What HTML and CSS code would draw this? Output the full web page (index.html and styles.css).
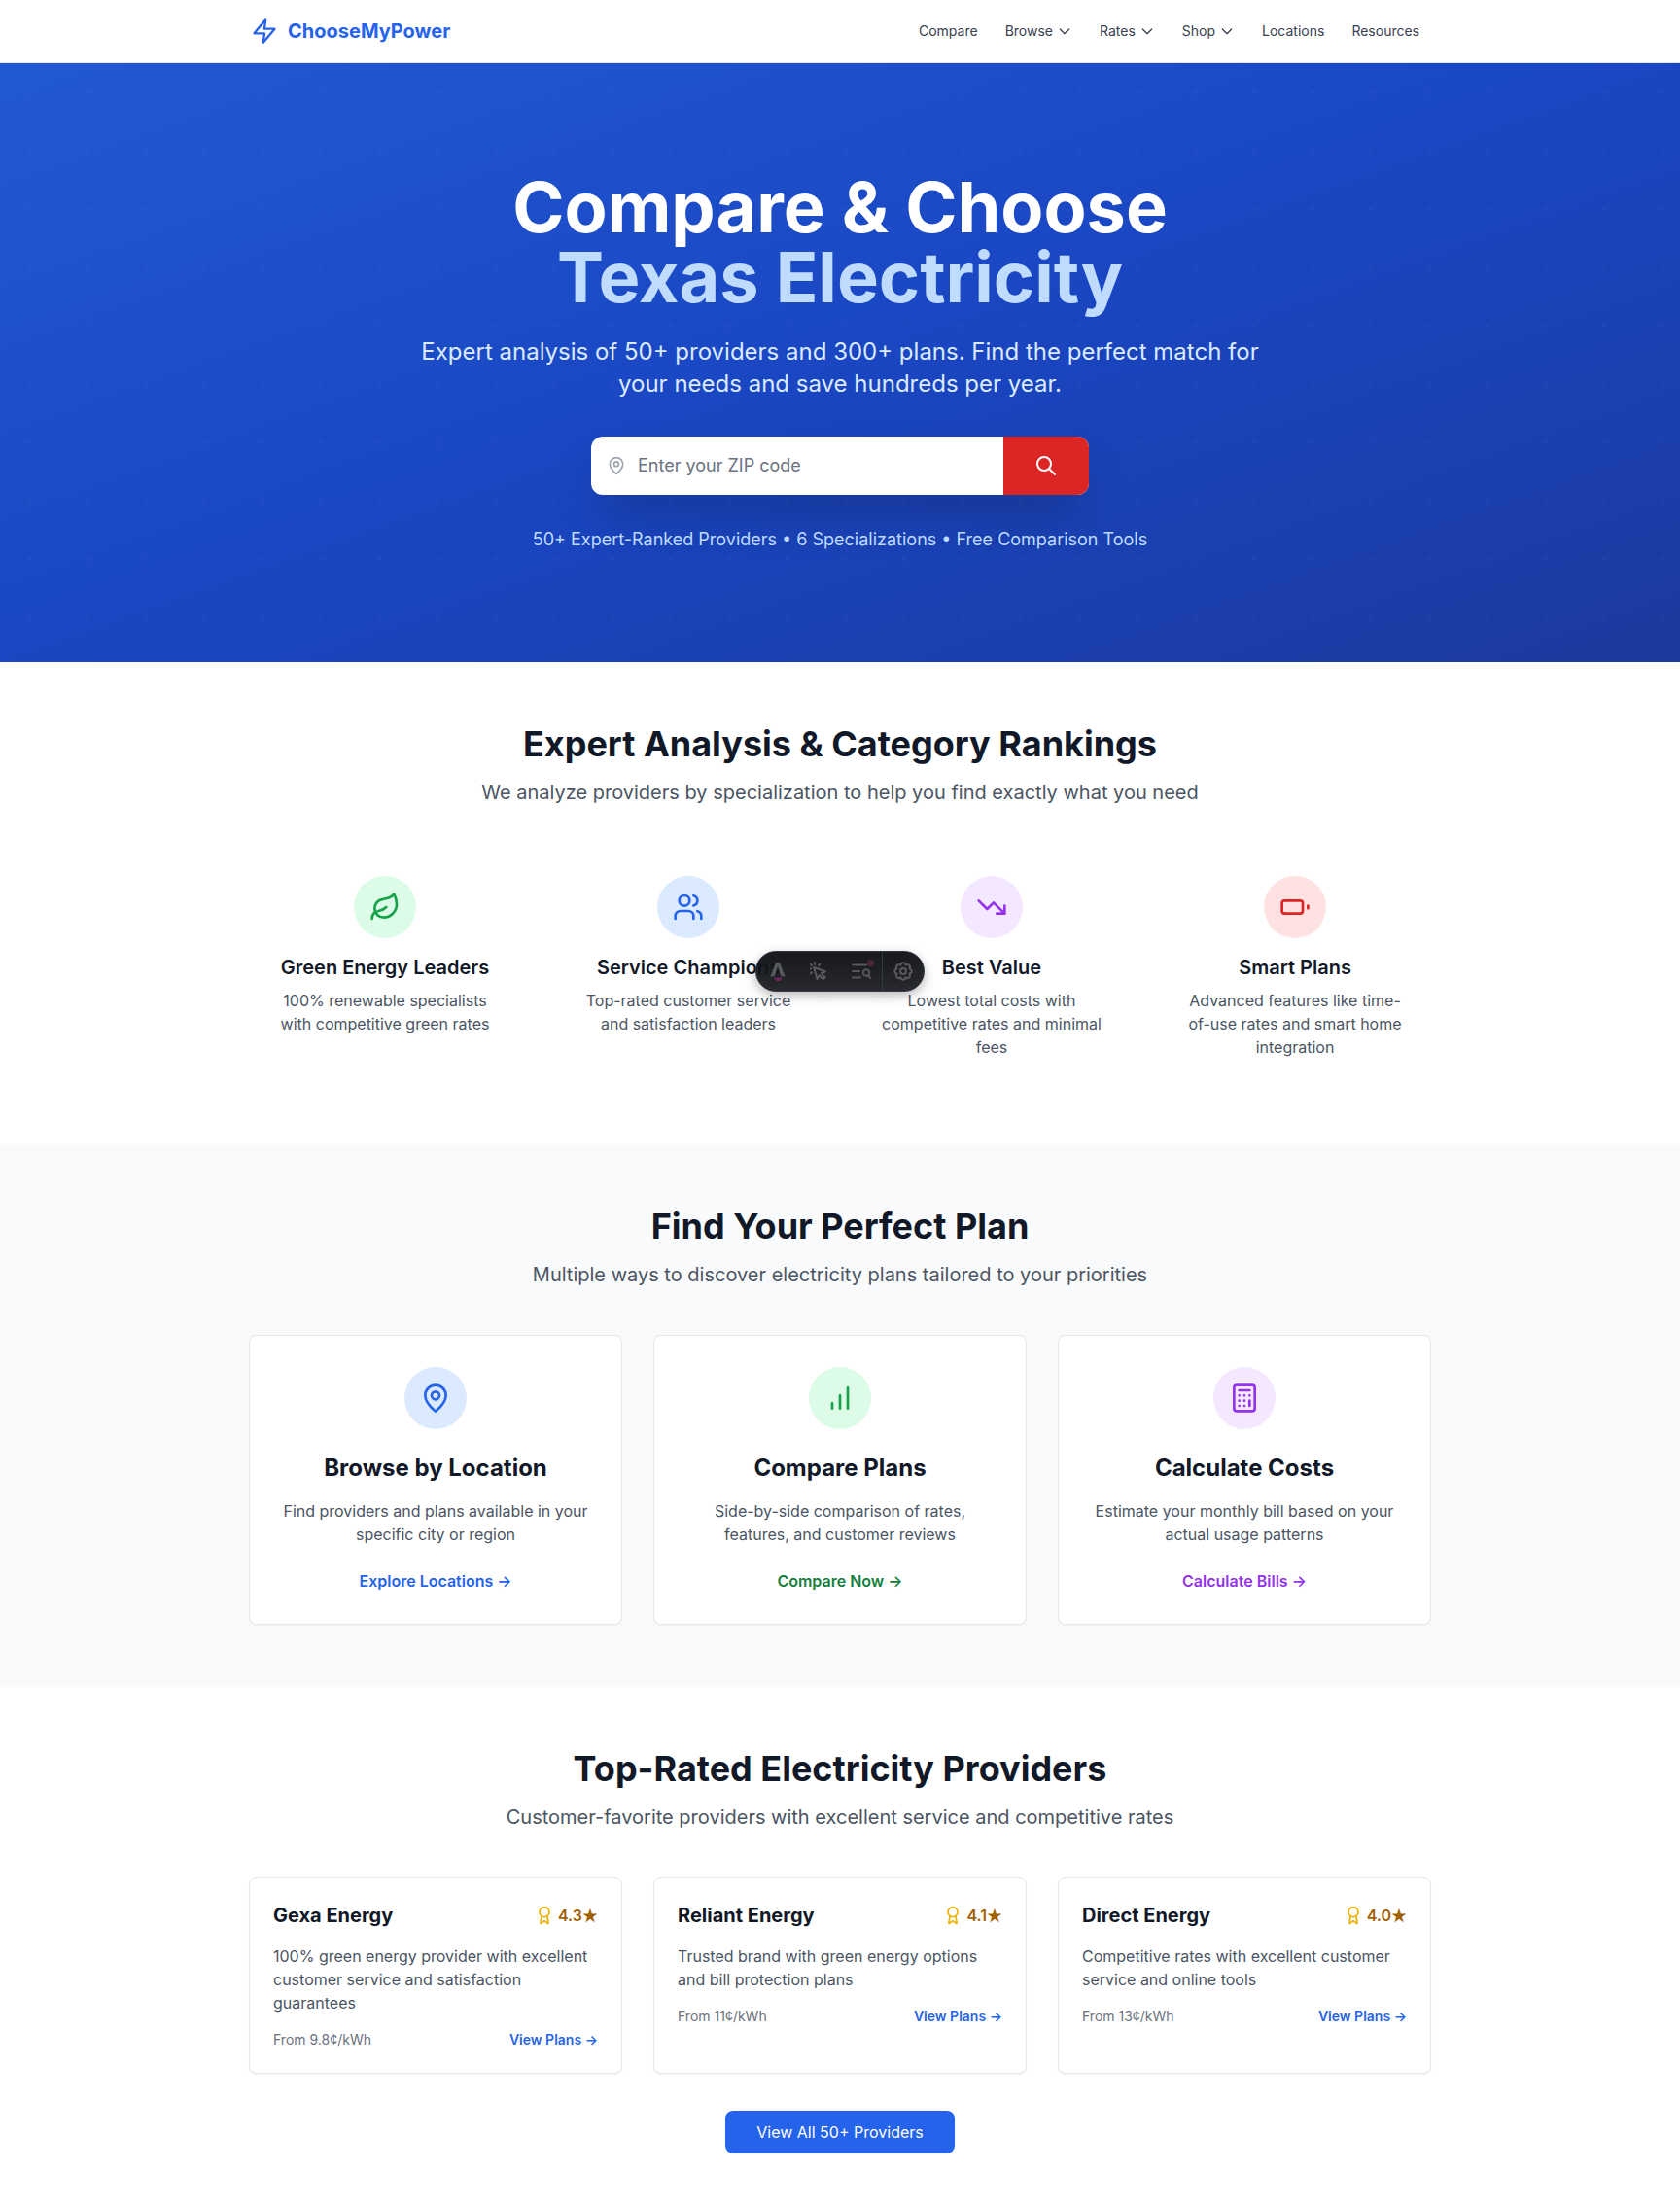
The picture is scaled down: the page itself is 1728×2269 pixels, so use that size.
FILE: index.html
```html
<!DOCTYPE html>
<html lang="en">
<head>
<meta charset="utf-8">
<meta name="viewport" content="width=device-width, initial-scale=1">
<title>ChooseMyPower</title>
<link rel="stylesheet" href="styles.css">
</head>
<body>
<header class="header">
  <div class="container header-row">
    <a class="brand" href="#">
      <svg class="icon brand-icon" viewBox="0 0 24 24"><path d="M13 2 3 14h9l-1 8 10-12h-9l1-8z"/></svg>
      ChooseMyPower
    </a>
    <nav class="nav">
      <a class="nav-link" href="#">Compare</a>
      <button class="nav-link" type="button">Browse <svg class="icon chevron" viewBox="0 0 24 24"><path d="m19 9-7 7-7-7"/></svg></button>
      <button class="nav-link" type="button">Rates <svg class="icon chevron" viewBox="0 0 24 24"><path d="m19 9-7 7-7-7"/></svg></button>
      <button class="nav-link" type="button">Shop <svg class="icon chevron" viewBox="0 0 24 24"><path d="m19 9-7 7-7-7"/></svg></button>
      <a class="nav-link" href="#">Locations</a>
      <a class="nav-link" href="#">Resources</a>
    </nav>
  </div>
</header>

<main>
  <section class="hero">
    <h1 class="hero-title">Compare &amp; Choose <span class="hero-accent">Texas Electricity</span></h1>
    <p class="hero-text">Expert analysis of 50+ providers and 300+ plans. Find the perfect match for your needs and save hundreds per year.</p>
    <form class="search">
      <label class="search-label" for="zip" aria-label="ZIP code">
        <svg class="icon pin" viewBox="0 0 24 24"><path d="M20 10c0 4.993-5.539 10.193-7.399 11.799a1 1 0 0 1-1.202 0C9.539 20.193 4 14.993 4 10a8 8 0 0 1 16 0"/><circle cx="12" cy="10" r="3"/></svg>
      </label>
      <input class="search-input" id="zip" type="text" placeholder="Enter your ZIP code">
      <button class="search-button" type="submit" aria-label="Search">
        <svg class="icon search-icon" viewBox="0 0 24 24"><circle cx="10" cy="10" r="7"/><path d="m21 21-6-6"/></svg>
      </button>
    </form>
    <p class="hero-note">50+ Expert-Ranked Providers • 6 Specializations • Free Comparison Tools</p>
  </section>

  <section class="section">
    <div class="container">
      <div class="section-head">
        <h2 class="section-title">Expert Analysis &amp; Category Rankings</h2>
        <p class="section-text">We analyze providers by specialization to help you find exactly what you need</p>
      </div>
      <div class="categories">
        <article class="category">
          <span class="disc green"><svg class="icon disc-icon" viewBox="0 0 24 24"><path d="M11 20A7 7 0 0 1 9.8 6.1C15.5 5 17 4.48 19 2c1 2 2 4.18 2 8 0 5.5-4.78 10-10 10Z"/><path d="M2 21c0-3 1.85-5.36 5.08-6C9.5 14.52 12 13 13 12"/></svg></span>
          <h3 class="category-title">Green Energy Leaders</h3>
          <p class="copy">100% renewable specialists with competitive green rates</p>
        </article>
        <article class="category">
          <span class="disc blue"><svg class="icon disc-icon" viewBox="0 0 24 24"><path d="M16 21v-2a4 4 0 0 0-4-4H6a4 4 0 0 0-4 4v2"/><circle cx="9" cy="7" r="4"/><path d="M22 21v-2a4 4 0 0 0-3-3.87"/><path d="M16 3.13a4 4 0 0 1 0 7.75"/></svg></span>
          <h3 class="category-title">Service Champions</h3>
          <p class="copy">Top-rated customer service and satisfaction leaders</p>
        </article>
        <article class="category">
          <span class="disc purple"><svg class="icon disc-icon" viewBox="0 0 24 24"><path d="m22 17-8.5-8.5-5 5L2 7"/><path d="M16 17h6v-6"/></svg></span>
          <h3 class="category-title">Best Value</h3>
          <p class="copy">Lowest total costs with competitive rates and minimal fees</p>
        </article>
        <article class="category">
          <span class="disc red"><svg class="icon disc-icon" viewBox="0 0 24 24"><rect x="2" y="7" width="16" height="10" rx="2"/><path d="M22 11v2"/></svg></span>
          <h3 class="category-title">Smart Plans</h3>
          <p class="copy">Advanced features like time-of-use rates and smart home integration</p>
        </article>
      </div>
    </div>
  </section>

  <section class="section section-muted">
    <div class="container">
      <div class="section-head">
        <h2 class="section-title">Find Your Perfect Plan</h2>
        <p class="section-text">Multiple ways to discover electricity plans tailored to your priorities</p>
      </div>
      <div class="cards">
        <article class="card tool">
          <span class="disc blue"><svg class="icon disc-icon" viewBox="0 0 24 24"><path d="M20 10c0 4.993-5.539 10.193-7.399 11.799a1 1 0 0 1-1.202 0C9.539 20.193 4 14.993 4 10a8 8 0 0 1 16 0"/><circle cx="12" cy="10" r="3"/></svg></span>
          <h3 class="tool-title">Browse by Location</h3>
          <p class="copy">Find providers and plans available in your specific city or region</p>
          <a class="tool-link link-blue" href="#">Explore Locations →</a>
        </article>
        <article class="card tool">
          <span class="disc green"><svg class="icon disc-icon" viewBox="0 0 24 24"><path d="M12 20V10M18 20V4M6 20v-4"/></svg></span>
          <h3 class="tool-title">Compare Plans</h3>
          <p class="copy">Side-by-side comparison of rates, features, and customer reviews</p>
          <a class="tool-link link-green" href="#">Compare Now →</a>
        </article>
        <article class="card tool">
          <span class="disc purple"><svg class="icon disc-icon" viewBox="0 0 24 24"><rect x="4" y="2" width="16" height="20" rx="2"/><path d="M8 6h8M16 14v4M16 10h.01M12 10h.01M8 10h.01M12 14h.01M8 14h.01M12 18h.01M8 18h.01"/></svg></span>
          <h3 class="tool-title">Calculate Costs</h3>
          <p class="copy">Estimate your monthly bill based on your actual usage patterns</p>
          <a class="tool-link link-purple" href="#">Calculate Bills →</a>
        </article>
      </div>
    </div>
  </section>

  <section class="section section-last">
    <div class="container">
      <div class="section-head">
        <h2 class="section-title">Top-Rated Electricity Providers</h2>
        <p class="section-text">Customer-favorite providers with excellent service and competitive rates</p>
      </div>
      <div class="cards">
        <article class="card provider">
          <div class="row">
            <h3 class="provider-title">Gexa Energy</h3>
            <span class="rating"><svg class="icon award" viewBox="0 0 24 24"><path d="m15.477 12.89 1.515 8.526a.5.5 0 0 1-.81.47l-3.58-2.687a1 1 0 0 0-1.197 0l-3.586 2.686a.5.5 0 0 1-.81-.469l1.514-8.526"/><circle cx="12" cy="8" r="6"/></svg><span>4.3<span class="star">★</span></span></span>
          </div>
          <p class="copy">100% green energy provider with excellent customer service and satisfaction guarantees</p>
          <div class="row"><span class="price">From 9.8¢/kWh</span><a class="plans-link" href="#">View Plans →</a></div>
        </article>
        <article class="card provider">
          <div class="row">
            <h3 class="provider-title">Reliant Energy</h3>
            <span class="rating"><svg class="icon award" viewBox="0 0 24 24"><path d="m15.477 12.89 1.515 8.526a.5.5 0 0 1-.81.47l-3.58-2.687a1 1 0 0 0-1.197 0l-3.586 2.686a.5.5 0 0 1-.81-.469l1.514-8.526"/><circle cx="12" cy="8" r="6"/></svg><span>4.1<span class="star">★</span></span></span>
          </div>
          <p class="copy">Trusted brand with green energy options and bill protection plans</p>
          <div class="row"><span class="price">From 11¢/kWh</span><a class="plans-link" href="#">View Plans →</a></div>
        </article>
        <article class="card provider">
          <div class="row">
            <h3 class="provider-title">Direct Energy</h3>
            <span class="rating"><svg class="icon award" viewBox="0 0 24 24"><path d="m15.477 12.89 1.515 8.526a.5.5 0 0 1-.81.47l-3.58-2.687a1 1 0 0 0-1.197 0l-3.586 2.686a.5.5 0 0 1-.81-.469l1.514-8.526"/><circle cx="12" cy="8" r="6"/></svg><span>4.0<span class="star">★</span></span></span>
          </div>
          <p class="copy">Competitive rates with excellent customer service and online tools</p>
          <div class="row"><span class="price">From 13¢/kWh</span><a class="plans-link" href="#">View Plans →</a></div>
        </article>
      </div>
      <div class="more"><a class="more-button" href="#">View All 50+ Providers</a></div>
    </div>
  </section>
</main>

<div class="toolbar" role="toolbar" aria-label="Developer toolbar">
  <button class="tool-button" type="button" aria-label="Menu">
    <svg class="tool-glyph" viewBox="1 0 18 18"><path fill="#57585c" d="M3 14.5 7.8 1.8Q8.1 1 9 1h2q.9 0 1.2.8L17 14.5q-2-.9-4.2-1.2L10 4.5l-2.8 8.8Q5 13.6 3 14.5z"/><path fill="#6b2560" d="M6.2 14.5q3.8 1.5 7.6 0 .2 2.3-1.900 3.500L10 20l-1-2q-2.600-1-2.800-3.500z"/></svg>
  </button>
  <button class="tool-button" type="button" aria-label="Inspect">
    <svg class="tool-glyph tool-stroke" viewBox="2 0 20 20"><path d="m6 6 3.5 12 2.3-3.9 3.7 4.2 2.2-2-3.9-4 4.2-2L6 6zM7 1.2l.3 1.8M2.700 2.700 4 4M2.500 7.500l.5-.2M3 12.500l.9-1.300M12.300 2.700 11 4"/></svg>
  </button>
  <button class="tool-button" type="button" aria-label="Audit">
    <svg class="tool-glyph tool-stroke" viewBox="0 0 20 20"><path d="M1 3.5h14M1 10h7M1 16.5h8"/><circle cx="15" cy="11.5" r="3.2"/><path d="m17 14 2 3"/></svg>
    <span class="tool-badge"></span>
  </button>
  <button class="tool-button tool-last" type="button" aria-label="Settings">
    <svg class="tool-glyph tool-stroke" viewBox="0 0 20 20"><path d="M16.4 7.4C19.5 7.8 19.5 12.2 16.4 12.6C18.3 15.2 15.2 18.3 12.6 16.4C12.2 19.5 7.8 19.5 7.4 16.4C4.8 18.3 1.7 15.2 3.6 12.6C.5 12.2 .5 7.8 3.6 7.4C1.7 4.8 4.8 1.7 7.4 3.6C7.8 .5 12.2 .5 12.6 3.6C15.2 1.7 18.3 4.8 16.4 7.4Z"/><circle cx="10" cy="10" r="3"/></svg>
  </button>
</div>
</body>
</html>
```
FILE: styles.css
```css
*,
*::before,
*::after {
  box-sizing: border-box;
}

body {
  margin: 0;
  position: relative;
  font-family: Inter, "Liberation Sans", sans-serif;
  font-size: 16px;
  line-height: 24px;
  color: #111827;
  background: #fff;
}

h1, h2, h3, p {
  margin: 0;
}

a {
  color: inherit;
  text-decoration: none;
}

button, input {
  font: inherit;
  color: inherit;
  border: 0;
  padding: 0;
  background: none;
}

.icon {
  display: block;
  flex: none;
  fill: none;
  stroke: currentColor;
  stroke-width: 2;
  stroke-linecap: round;
  stroke-linejoin: round;
}

.container {
  max-width: 1280px;
  margin: 0 auto;
  padding: 0 32px;
}

/* Header */
.header {
  border-bottom: 1px solid #e5e7eb;
}

.header-row {
  display: flex;
  align-items: center;
  justify-content: space-between;
  height: 64px;
}

.brand {
  display: flex;
  align-items: center;
  gap: 10px;
  padding-left: 2px;
  font-size: 20px;
  line-height: 28px;
  font-weight: 700;
  color: #2563eb;
}

.brand-icon {
  width: 28px;
  height: 28px;
}

.nav {
  display: flex;
  gap: 4px;
}

.nav-link {
  display: flex;
  align-items: center;
  gap: 4px;
  padding: 8px 12px;
  font-size: 14px;
  line-height: 20px;
  color: #374151;
}

.chevron {
  width: 16px;
  height: 16px;
}

/* Hero */
.hero {
  display: flex;
  flex-direction: column;
  align-items: center;
  padding: 112px 32px;
  text-align: center;
  background-image:
    radial-gradient(circle at 30px 30px, rgba(255, 255, 255, 0.02) 2px, transparent 3px),
    linear-gradient(rgba(0, 0, 0, 0.1), rgba(0, 0, 0, 0.1)),
    linear-gradient(to bottom right, #2563eb, #1d4ed8, #1e40af);
  background-size: 60px 60px, 100% 100%, 100% 100%;
}

.hero-title {
  font-size: 72px;
  line-height: 72px;
  font-weight: 700;
  color: #fff;
}

.hero-accent {
  display: block;
  color: #bfdbfe;
}

.hero-text {
  max-width: 896px;
  margin-top: 24px;
  font-size: 24px;
  line-height: 33px;
  color: #dbeafe;
}

.search {
  display: flex;
  width: 100%;
  max-width: 512px;
  height: 60px;
  margin-top: 38px;
  overflow: hidden;
  border-radius: 12px;
  background: #fff;
  box-shadow: 0 25px 50px -12px rgba(0, 0, 0, 0.25);
}

.search-label {
  display: flex;
  align-items: center;
  padding: 0 12px 0 16px;
  color: #9ca3af;
}

.pin {
  width: 20px;
  height: 20px;
}

.search-input {
  flex: 1;
  min-width: 0;
  font-size: 18px;
  line-height: 28px;
  color: #111827;
  outline: 0;
}

.search-input::placeholder {
  color: #6b7280;
  opacity: 1;
}

.search-button {
  display: flex;
  align-items: center;
  justify-content: center;
  width: 88px;
  background: #dc2626;
  color: #fff;
}

.search-icon {
  width: 24px;
  height: 24px;
}

.hero-note {
  margin-top: 32px;
  font-size: 18px;
  line-height: 28px;
  color: #bfdbfe;
}

/* Sections */
.section {
  padding: 64px 0;
}

.section-muted {
  background: #f9fafb;
}

.section-last {
  padding-bottom: 48px;
}

.section-head {
  margin-bottom: 48px;
  text-align: center;
}

.section-title {
  font-size: 36px;
  line-height: 40px;
  font-weight: 700;
}

.section-text {
  margin-top: 16px;
  font-size: 20px;
  line-height: 28px;
  color: #4b5563;
}

.copy {
  color: #4b5563;
}

.disc {
  display: flex;
  align-items: center;
  justify-content: center;
  width: 64px;
  height: 64px;
  border-radius: 50%;
}

.disc-icon {
  width: 32px;
  height: 32px;
}

.green { background: #dcfce7; color: #16a34a; }
.blue { background: #dbeafe; color: #2563eb; }
.purple { background: #f3e8ff; color: #9333ea; }
.red { background: #fee2e2; color: #dc2626; }

.categories {
  display: grid;
  grid-template-columns: repeat(4, 1fr);
  gap: 32px;
}

.category {
  display: flex;
  flex-direction: column;
  align-items: center;
  padding: 24px;
  text-align: center;
}

.category-title {
  margin: 16px 0 8px;
  font-size: 20px;
  line-height: 28px;
  font-weight: 600;
}

.cards {
  display: grid;
  grid-template-columns: repeat(3, 1fr);
  gap: 32px;
}

.card {
  border: 1px solid #e5e7eb;
  border-radius: 8px;
  background: #fff;
  box-shadow: 0 1px 2px rgba(0, 0, 0, 0.05);
}

.tool {
  display: flex;
  flex-direction: column;
  align-items: center;
  padding: 32px;
  text-align: center;
}

.tool-title {
  margin: 24px 0 16px;
  font-size: 24px;
  line-height: 32px;
  font-weight: 700;
}

.tool-link {
  margin-top: 24px;
  font-weight: 600;
}

.link-blue { color: #2563eb; }
.link-green { color: #15803d; }
.link-purple { color: #9333ea; }

/* Providers */
.provider {
  display: flex;
  flex-direction: column;
  gap: 16px;
  padding: 24px;
}

.row {
  display: flex;
  align-items: center;
  justify-content: space-between;
  font-size: 14px;
  line-height: 20px;
}

.provider-title {
  font-size: 20px;
  line-height: 28px;
  font-weight: 700;
}

.rating {
  display: flex;
  align-items: center;
  gap: 4px;
  font-size: 16px;
  line-height: 24px;
  font-weight: 600;
  color: #a16207;
}

.star {
  font-family: "Noto Sans CJK JP", sans-serif;
  line-height: 20px;
}

.award {
  width: 20px;
  height: 20px;
  color: #eab308;
}

.price {
  color: #6b7280;
}

.plans-link {
  font-weight: 600;
  color: #2563eb;
}

.more {
  display: flex;
  justify-content: center;
  margin-top: 38px;
}

.more-button {
  padding: 10px 32px;
  border-radius: 8px;
  background: #2563eb;
  color: #fff;
}

/* Floating developer toolbar */
.toolbar {
  position: absolute;
  top: 978px;
  left: 50%;
  transform: translateX(-50%);
  display: flex;
  height: 42px;
  overflow: hidden;
  border: 1px solid #343841;
  border-radius: 999px;
  background: linear-gradient(180deg, rgba(19, 21, 26, 0.98), rgba(19, 21, 26, 0.88));
  filter: drop-shadow(0 4px 6px rgba(0, 0, 0, 0.3));
}

.tool-button {
  position: relative;
  display: flex;
  align-items: center;
  justify-content: center;
  width: 43px;
}

.tool-last {
  border-left: 1px solid #343841;
}

.tool-glyph {
  width: 20px;
  height: 20px;
}

.tool-stroke {
  fill: none;
  stroke: #57585c;
  stroke-width: 2;
  stroke-linecap: round;
  stroke-linejoin: round;
}

.tool-badge {
  position: absolute;
  top: 8px;
  right: 8px;
  width: 7px;
  height: 7px;
  border-radius: 50%;
  background: #4e2737;
}
```
